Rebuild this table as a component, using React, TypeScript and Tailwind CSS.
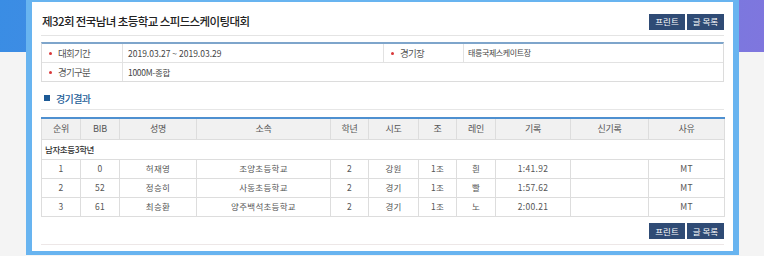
import React from 'react';

type ResultRow = {
    rank: number
    bib: string
    name: string
    school: string
    grade: string
    region: string
    group: string
    lane: string
    record: string
    newRecord: string
    reason: string
}

const COLUMNS = ['순위', 'BIB', '성명', '소속', '학년', '시도', '조', '레인', '기록', '신기록', '사유'];
const WIDTHS = ['w-[39px]', 'w-[39px]', 'w-[77px]', 'w-[134px]', 'w-[38px]', 'w-[50px]', 'w-[38px]', 'w-[39px]', 'w-[75px]', 'w-[78px]', 'w-[76px]'];

const RESULTS: ResultRow[] = [
    { rank: 1, bib: '0', name: '허재영', school: '조양초등학교', grade: '2', region: '강원', group: '1조', lane: '흰', record: '1:41.92', newRecord: '', reason: 'MT' },
    { rank: 2, bib: '52', name: '정승히', school: '사동초등학교', grade: '2', region: '경기', group: '1조', lane: '빨', record: '1:57.62', newRecord: '', reason: 'MT' },
    { rank: 3, bib: '61', name: '최승환', school: '양주백석초등학교', grade: '2', region: '경기', group: '1조', lane: '노', record: '2:00.21', newRecord: '', reason: 'MT' },
];

const Buttons = () => (
    <div className="flex justify-end gap-[2px]">
        <button className="h-[16px] w-[36px] bg-[#2f4b75] text-[8.5px] leading-none text-white">프린트</button>
        <button className="h-[16px] w-[37px] bg-[#2f4b75] text-[8.5px] leading-none text-white">글 목록</button>
    </div>
)

const Label = ({ text }: { text: string }) => (
    <div className="flex items-center pl-[7px] text-[9.5px] tracking-[-0.7px] text-[#555]">
        <span className="mr-[6px] h-[3px] w-[3px] rounded-full bg-[#d9383a]"></span>
        {text}
    </div>
)

export default function App() {
    return (
        <div
            className="h-[256px] w-[764px] overflow-hidden bg-[#f4f4f4] bg-[linear-gradient(100deg,#3a8de4_0%,#5a86e2_50%,#7f76de_100%)] bg-no-repeat bg-[length:100%_52px]"
            style={{ fontFamily: '"Noto Sans CJK KR", "Noto Sans", sans-serif' }}
        >
            <div className="ml-[26px] h-[255px] w-[713px] overflow-hidden border-x-[6px] border-t-2 border-b-4 border-[#68b4f0] bg-white px-[9px]">
                {/* title */}
                <div className="flex items-center justify-between border-b border-[#e4e4e4] pt-[11px] pb-[5px]">
                    <h1 className="pl-[1px] text-[11.5px] font-medium tracking-[-0.6px] text-[#222]">제32회 전국남녀 초등학교 스피드스케이팅대회</h1>
                    <Buttons />
                </div>

                {/* info */}
                <div className="mt-[6px] border-x border-b border-t-2 border-x-[#dcdcdc] border-b-[#dcdcdc] border-t-[#7ea5cb]">
                    <div className="flex h-[19px] border-b border-[#e2e2e2]">
                        <div className="flex w-[81px] border-r border-[#e2e2e2]"><Label text="대회기간" /></div>
                        <div className="flex w-[261px] items-center border-r border-[#e2e2e2] pl-[5px] text-[8.5px] text-[#444]">2019.03.27 ~ 2019.03.29</div>
                        <div className="flex w-[80px] border-r border-[#e2e2e2]"><Label text="경기장" /></div>
                        <div className="flex flex-1 items-center pl-[4px] text-[8px] tracking-[-0.4px] text-[#444]">태릉국제스케이트장</div>
                    </div>
                    <div className="flex h-[18px]">
                        <div className="flex w-[81px] border-r border-[#e2e2e2]"><Label text="경기구분" /></div>
                        <div className="flex flex-1 items-center pl-[5px] text-[8.5px] tracking-[-0.3px] text-[#444]">1000M-종합</div>
                    </div>
                </div>

                {/* section */}
                <div className="mt-[7px] border-b border-[#e6e6e6] pb-[2px]">
                    <div className="flex h-[18px] items-center pl-[3px]">
                        <span className="mr-[6px] h-[6px] w-[6px] bg-[#1d5a96]"></span>
                        <span className="text-[10px] font-medium tracking-[-0.6px] text-[#255e98]">경기결과</span>
                    </div>
                </div>

                {/* results */}
                <table className="mt-[7px] w-full table-fixed border-collapse border-t-2 border-[#4e90d0]">
                    <colgroup>
                        {WIDTHS.map((w, i) => <col key={i} className={w} />)}
                    </colgroup>
                    <thead>
                        <tr className="h-[21px] bg-[#f1f1f1]">
                            {COLUMNS.map(c => (
                                <th key={c} className="border border-t-0 border-[#dddddd] p-0 text-center text-[9px] font-normal tracking-[-0.2px] text-[#555]">{c}</th>
                            ))}
                        </tr>
                    </thead>
                    <tbody>
                        <tr className="h-[20px]">
                            <td colSpan={11} className="border border-[#dddddd] pl-[3px] text-left text-[8.5px] font-medium tracking-[-0.4px] text-[#333]">남자초등3학년</td>
                        </tr>
                        {RESULTS.map(r => (
                            <tr key={r.rank} className="h-[19px] text-center text-[8.5px] tracking-[0.3px] text-[#555]">
                                <td className="border border-[#dddddd] p-0">{r.rank}</td>
                                <td className="border border-[#dddddd] p-0">{r.bib}</td>
                                <td className="border border-[#dddddd] p-0">{r.name}</td>
                                <td className="border border-[#dddddd] p-0">{r.school}</td>
                                <td className="border border-[#dddddd] p-0">{r.grade}</td>
                                <td className="border border-[#dddddd] p-0">{r.region}</td>
                                <td className="border border-[#dddddd] p-0">{r.group}</td>
                                <td className="border border-[#dddddd] p-0">{r.lane}</td>
                                <td className="border border-[#dddddd] p-0">{r.record}</td>
                                <td className="border border-[#dddddd] p-0">{r.newRecord}</td>
                                <td className="border border-[#dddddd] p-0">{r.reason}</td>
                            </tr>
                        ))}
                    </tbody>
                </table>

                <div className="mt-[6px]">
                    <Buttons />
                </div>
                <div className="mt-[5px] border-t border-[#ede7e7]"></div>
            </div>
        </div>
    )
}
